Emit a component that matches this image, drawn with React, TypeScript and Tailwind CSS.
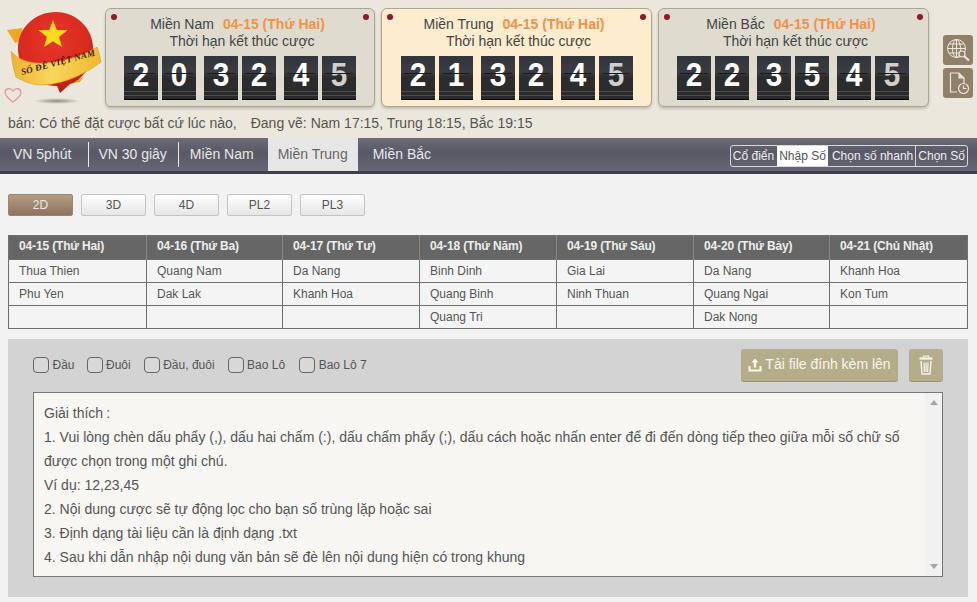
import React from "react";

const F = "font-['Liberation_Sans',Arial,sans-serif]";

function Digit({ d, fade, mr }: { d: string; fade?: boolean; mr?: boolean }) {
  return (
    <div className={`relative h-[44px] w-[34px] overflow-hidden bg-[linear-gradient(#33333d_0%,#3b3b43_36%,#2b2b2b_50%,#2e2e2e_100%)] ${mr ? "mr-[8px]" : "mr-[4px] last:mr-0"}`}>
      <div className={`flex h-[37px] scale-x-90 items-center justify-center text-[33px] font-bold leading-none ${fade ? "text-[#cfcfcf]" : "text-white"}`}>{d}</div>
      <div className="absolute left-[3px] right-[3px] top-[17px] h-px bg-[#1c1c1c]" />
      <div className="absolute inset-x-0 bottom-0 h-[12px] bg-[repeating-linear-gradient(#2a2a2a_0px,#2a2a2a_3px,#4b4b4b_3px,#4b4b4b_4px)]" />
      <div className="absolute inset-x-0 bottom-0 h-px bg-black" />
    </div>
  );
}

function Panel({ name, digits, active, narrow, nudge }: { name: string; digits: string; active?: boolean; narrow?: boolean; nudge?: boolean }) {
  const ds = digits.split("");
  return (
    <div className={`relative h-[99px] rounded-[6px] border border-[#aba793] pt-[7px] shadow-[0_2px_3px_rgba(0,0,0,0.18)] ${narrow ? "w-[270px]" : "w-[271px]"} ${active ? "bg-[#fdeccd]" : "bg-[#dfdccf]"}`}>
      <span className="absolute left-[5px] top-[5px] h-[6px] w-[6px] rounded-full bg-[#8e1b2c]" />
      <span className="absolute right-[5px] top-[5px] h-[6px] w-[6px] rounded-full bg-[#8e1b2c]" />
      <div className="pr-[5px] text-center text-[14px] leading-[17px] text-[#444]">
        {name}
        <span className="ml-[9px] font-bold text-[#f0924a]">04-15 (Thứ Hai)</span>
      </div>
      <div className="pl-[4px] text-center text-[14px] leading-[17px] text-[#444]">Thời hạn kết thúc cược</div>
      <div className={`mt-[6px] flex justify-center ${nudge ? "pr-[1px]" : ""}`}>
        {ds.map((d, i) => (
          <Digit key={i} d={d} fade={i === 5} mr={i === 1 || i === 3} />
        ))}
      </div>
    </div>
  );
}

function Logo() {
  return (
    <div className="relative h-[107px] w-[97px] shrink-0">
      <svg width="105" height="107" viewBox="0 0 105 107" className="absolute -left-[8px] top-0">
        <defs>
          <radialGradient id="ball" cx="48%" cy="35%" r="65%">
            <stop offset="0%" stopColor="#e8352a" />
            <stop offset="70%" stopColor="#d92a1e" />
            <stop offset="100%" stopColor="#ad1c14" />
          </radialGradient>
          <linearGradient id="rib" x1="0" y1="0" x2="1" y2="0">
            <stop offset="0%" stopColor="#eeb430" />
            <stop offset="45%" stopColor="#f8d55c" />
            <stop offset="100%" stopColor="#f0b830" />
          </linearGradient>
          <radialGradient id="shade">
            <stop offset="0%" stopColor="#77776f" stopOpacity="0.8" />
            <stop offset="100%" stopColor="#77776f" stopOpacity="0" />
          </radialGradient>
        </defs>
        <ellipse cx="57" cy="101" rx="23" ry="3" fill="url(#shade)" />
        <path d="M7 30 L22 28 L24 40 L15 43 Z" fill="#f0a822" />
        <path d="M70 84 L84 76 L80 82 Z" fill="#f0a822" />
        <path d="M56 12 C77 12 93 29 93 48 C93 68 80 81 70 84 L60 93 L57 86 C34 86 18 70 18 48 C18 28 35 12 56 12 Z" fill="url(#ball)" />
        <polygon points="53,20 56.8,30 67.5,30.3 59,37 62,47 53,41.3 44,47 47,37 38.5,30.3 49.2,30" fill="#fbdc1d" />
        <path d="M11 51 C18 60 30 64 45 63 C65 62 85 55 97 47 C99 52 100 57 101 62 C88 72 66 84 43 85 C33 85 24 82 16 77 C13 68 12 60 11 51 Z" fill="url(#rib)" stroke="#e59c1a" strokeWidth="0.6" />
        <text x="0" y="0" transform="translate(22 75) rotate(-15)" fontFamily="'Liberation Serif',serif" fontSize="9" fontWeight="700" fontStyle="italic" fill="#3a1a06" textLength="76">SỐ ĐỀ VIỆT NAM</text>
        <path d="M13 102 C6 97 5 94 5 92.5 C5 88.5 10.5 87 13 91 C15.5 87 21 88.5 21 92.5 C21 94 20 97 13 102 Z" fill="none" stroke="#e39a9c" strokeWidth="1.3" />
      </svg>
    </div>
  );
}

function SideIcon({ kind }: { kind: "globe" | "file" }) {
  return (
    <div className="flex h-[30px] w-[30px] items-center justify-center rounded-[3px] bg-[#907f69]">
      {kind === "globe" ? (
        <svg width="24" height="24" viewBox="0 0 24 24" fill="none" stroke="#ebe7dc" strokeWidth="1">
          <circle cx="10.5" cy="10.5" r="9" />
          <ellipse cx="10.5" cy="10.5" rx="4" ry="9" />
          <path d="M1.5 10.5H19.5M3 6H18M3 15H13M10.5 1.5V19.5" />
          <circle cx="16" cy="16" r="3" fill="#907f69" strokeWidth="1.2" />
          <path d="M18 18L23 22.5" strokeWidth="2.2" />
        </svg>
      ) : (
        <svg width="24" height="24" viewBox="0 0 24 24" fill="none" stroke="#ebe7dc" strokeWidth="1.2">
          <path d="M11 21H4.5V2H13L18 7V12" />
          <path d="M13 2.5V7H18" fill="#ebe7dc" />
          <circle cx="17.5" cy="17.5" r="5" />
          <path d="M17.5 14.5V17.5H20.5" />
        </svg>
      )}
    </div>
  );
}

const tabs = [
  { t: "VN 5phút", c: "pl-[13px] pr-[17px] text-[#e8e8e8]" },
  { t: "VN 30 giây", c: "pl-[9px] pr-[11px] text-[#e8e8e8]" },
  { t: "Miền Nam", c: "pl-[11px] pr-[14px] text-[#e8e8e8]" },
  { t: "Miền Trung", c: "bg-[#e6e6e6] px-[10px] text-[#666]" },
  { t: "Miền Bắc", c: "pl-[15px] text-[#e8e8e8]" },
];
const modes = [
  { t: "Cổ điển", c: "pl-[2px] pr-[3px] text-[#eee]" },
  { t: "Nhập Số", c: "px-[2px] bg-white text-[#555]" },
  { t: "Chọn số nhanh", c: "pl-[4px] pr-[2px] text-[#eee]" },
  { t: "Chọn Số", c: "px-[2px] border-l border-[#d8d8d8] text-[#eee]" },
];
const kinds = ["2D", "3D", "4D", "PL2", "PL3"];
const cols = [
  ["04-15 (Thứ Hai)", "Thua Thien", "Phu Yen", ""],
  ["04-16 (Thứ Ba)", "Quang Nam", "Dak Lak", ""],
  ["04-17 (Thứ Tư)", "Da Nang", "Khanh Hoa", ""],
  ["04-18 (Thứ Năm)", "Binh Dinh", "Quang Binh", "Quang Tri"],
  ["04-19 (Thứ Sáu)", "Gia Lai", "Ninh Thuan", ""],
  ["04-20 (Thứ Bảy)", "Da Nang", "Quang Ngai", "Dak Nong"],
  ["04-21 (Chủ Nhật)", "Khanh Hoa", "Kon Tum", ""],
];
const widths = ["w-[138px]", "w-[136px]", "w-[137px]", "w-[137px]", "w-[137px]", "w-[136px]", "w-[138px]"];
const checks = [
  { t: "Đầu", c: "mr-[12px]" },
  { t: "Đuôi", c: "mr-[13px]" },
  { t: "Đầu, đuôi", c: "mr-[13px]" },
  { t: "Bao Lô", c: "mr-[14px]" },
  { t: "Bao Lô 7", c: "" },
];
const lines = [
  "1. Vui lòng chèn dấu phẩy (,), dấu hai chấm (:), dấu chấm phẩy (;), dấu cách hoặc nhấn enter để đi đến dòng tiếp theo giữa mỗi số chữ số được chọn trong một ghi chú.",
  "Ví dụ: 12,23,45",
  "2. Nội dung cược sẽ tự động lọc cho bạn số trùng lặp hoặc sai",
  "3. Định dạng tài liệu cần là định dạng .txt",
  "4. Sau khi dẫn nhập nội dung văn bản sẽ đè lên nội dung hiện có trong khung",
];

export default function App() {
  return (
    <div className={`h-[602px] w-[977px] overflow-hidden bg-[#f2f2f2] ${F}`}>
      <header className="h-[138px] bg-[#ebe7dc]">
        <div className="flex h-[115px] pl-[8px] pt-[8px]">
          <div className="-mt-[8px]"><Logo /></div>
          <div className="flex gap-[6px]">
            <Panel name="Miền Nam" digits="203245" narrow />
            <Panel name="Miền Trung" digits="213245" active />
            <Panel name="Miền Bắc" digits="223545" nudge />
          </div>
          <div className="ml-[14px] mt-[27px] flex flex-col gap-[3px]">
            <SideIcon kind="globe" />
            <SideIcon kind="file" />
          </div>
        </div>
        <div className="whitespace-pre pl-[8px] text-[14px] leading-[17px] text-[#555]">
          bán: Có thể đặt cược bất cứ lúc nào,<span className="ml-[14px]">Đang vẽ: Nam 17:15, Trung 18:15, Bắc 19:15</span>
        </div>
      </header>

      <nav className="flex h-[36px] items-start justify-between border-b-[3px] border-[#3f3f4b] bg-[linear-gradient(#6c6c7a_0%,#595965_45%,#666674_100%)]">
        <div className="flex h-[33px] items-center">
          {tabs.map((t, i) => (
            <React.Fragment key={t.t}>
              <div className={`flex h-[33px] items-center text-[14px] ${t.c}`}>{t.t}</div>
              {i < 2 && <div className="h-[25px] w-px bg-[#e8e8e8]" />}
            </React.Fragment>
          ))}
        </div>
        <div className="mr-[9px] mt-[7px] flex h-[22px] overflow-hidden rounded-[3px] border border-[#d8d8d8] text-[12px] leading-[20px]">
          {modes.map((m) => (
            <div key={m.t} className={m.c}>{m.t}</div>
          ))}
        </div>
      </nav>

      <div className="flex gap-[8px] pl-[8px] pt-[20px]">
        {kinds.map((k, i) => (
          <div key={k} className={`flex h-[22px] w-[65px] items-center justify-center rounded-[2px] border text-[12px] ${i === 0 ? "border-[#9c8673] bg-[linear-gradient(#b59a84,#8f735e)] text-[#f1e7de]" : "border-[#c4c4c4] bg-[linear-gradient(#fdfdfd,#e6e6e6)] text-[#555]"}`}>{k}</div>
        ))}
      </div>

      <table className="ml-[8px] mt-[19px] w-[959px] table-fixed border-collapse border border-[#6f6f6f] text-[12px]">
        <thead>
          <tr>
            {cols.map((c, i) => (
              <th key={i} className={`${widths[i]} h-[24px] border-l border-[#8a8a8a] bg-[#666] pb-[3px] pl-[10px] text-left font-bold tracking-[-0.15px] text-[#eee] first:border-l-0`}>{c[0]}</th>
            ))}
          </tr>
        </thead>
        <tbody>
          {[1, 2, 3].map((r) => (
            <tr key={r}>
              {cols.map((c, i) => (
                <td key={i} className="h-[23px] border border-[#6f6f6f] bg-[#f4f4f4] pl-[10px] text-[#555]">{c[r]}</td>
              ))}
            </tr>
          ))}
        </tbody>
      </table>

      <section className="ml-[8px] mt-[10px] h-[258px] w-[960px] bg-[#d3d3d3] px-[25px]">
        <div className="flex h-[53px] items-center justify-between">
          <div className="-mt-[2px] flex items-center text-[12px] text-[#555]">
            {checks.map((c) => (
              <label key={c.t} className={`flex items-center gap-[3.5px] ${c.c}`}>
                <span className="h-[16px] w-[16px] rounded-[4px] border border-[#666] bg-[#d8d8d8]" />
                {c.t}
              </label>
            ))}
          </div>
          <div className="flex gap-[11px] pb-[2px]">
            <div className="flex h-[32px] w-[157px] items-center justify-center gap-[3px] rounded-[3px] bg-[#b4ad8a] text-[14px] text-[#f7f5ec] shadow-[0_1px_0_#9c9675]">
              <svg width="14" height="14" viewBox="0 0 14 14" fill="#f7f5ec">
                <path d="M7 0.5L10.6 4.4H8.2V9.5H5.8V4.4H3.4Z" />
                <path d="M0.5 8H2.5V11.5H11.5V8H13.5V13.5H0.5Z" />
              </svg>
              Tải file đính kèm lên
            </div>
            <div className="flex h-[32px] w-[34px] items-center justify-center rounded-[3px] bg-[#b4ad8a] shadow-[0_1px_0_#9c9675]">
              <svg width="14" height="20" viewBox="0 0 14 20" fill="none" stroke="#f7f5ec">
                <path d="M4.5 2.5V1H9.5V2.5" strokeWidth="1.2" />
                <path d="M0.5 3.5H13.5" strokeWidth="2.2" />
                <path d="M2 6L3 19H11L12 6" strokeWidth="1.4" />
                <path d="M5 7.5L5.4 17M7 7.5V17M9 7.5L8.6 17" strokeWidth="1.2" />
              </svg>
            </div>
          </div>
        </div>
        <div className="relative h-[185px] w-[910px] border border-[#777] bg-[#f7f6f2]">
          <div className="w-[875px] pl-[10px] pt-[8px] text-[14px] leading-[24px] text-[#555]">
            <div>Giải thích<span className="ml-[3px]">:</span></div>
            {lines.map((l, i) => (
              <div key={i}>{l}</div>
            ))}
          </div>
          <div className="absolute inset-y-0 right-0 flex w-[17px] flex-col items-center justify-between bg-[#f1f1f1] py-[7px]">
            <span className="h-0 w-0 border-x-[4px] border-b-[5px] border-x-transparent border-b-[#a3a3a3]" />
            <span className="h-0 w-0 border-x-[4px] border-t-[5px] border-x-transparent border-t-[#a3a3a3]" />
          </div>
        </div>
      </section>
    </div>
  );
}
